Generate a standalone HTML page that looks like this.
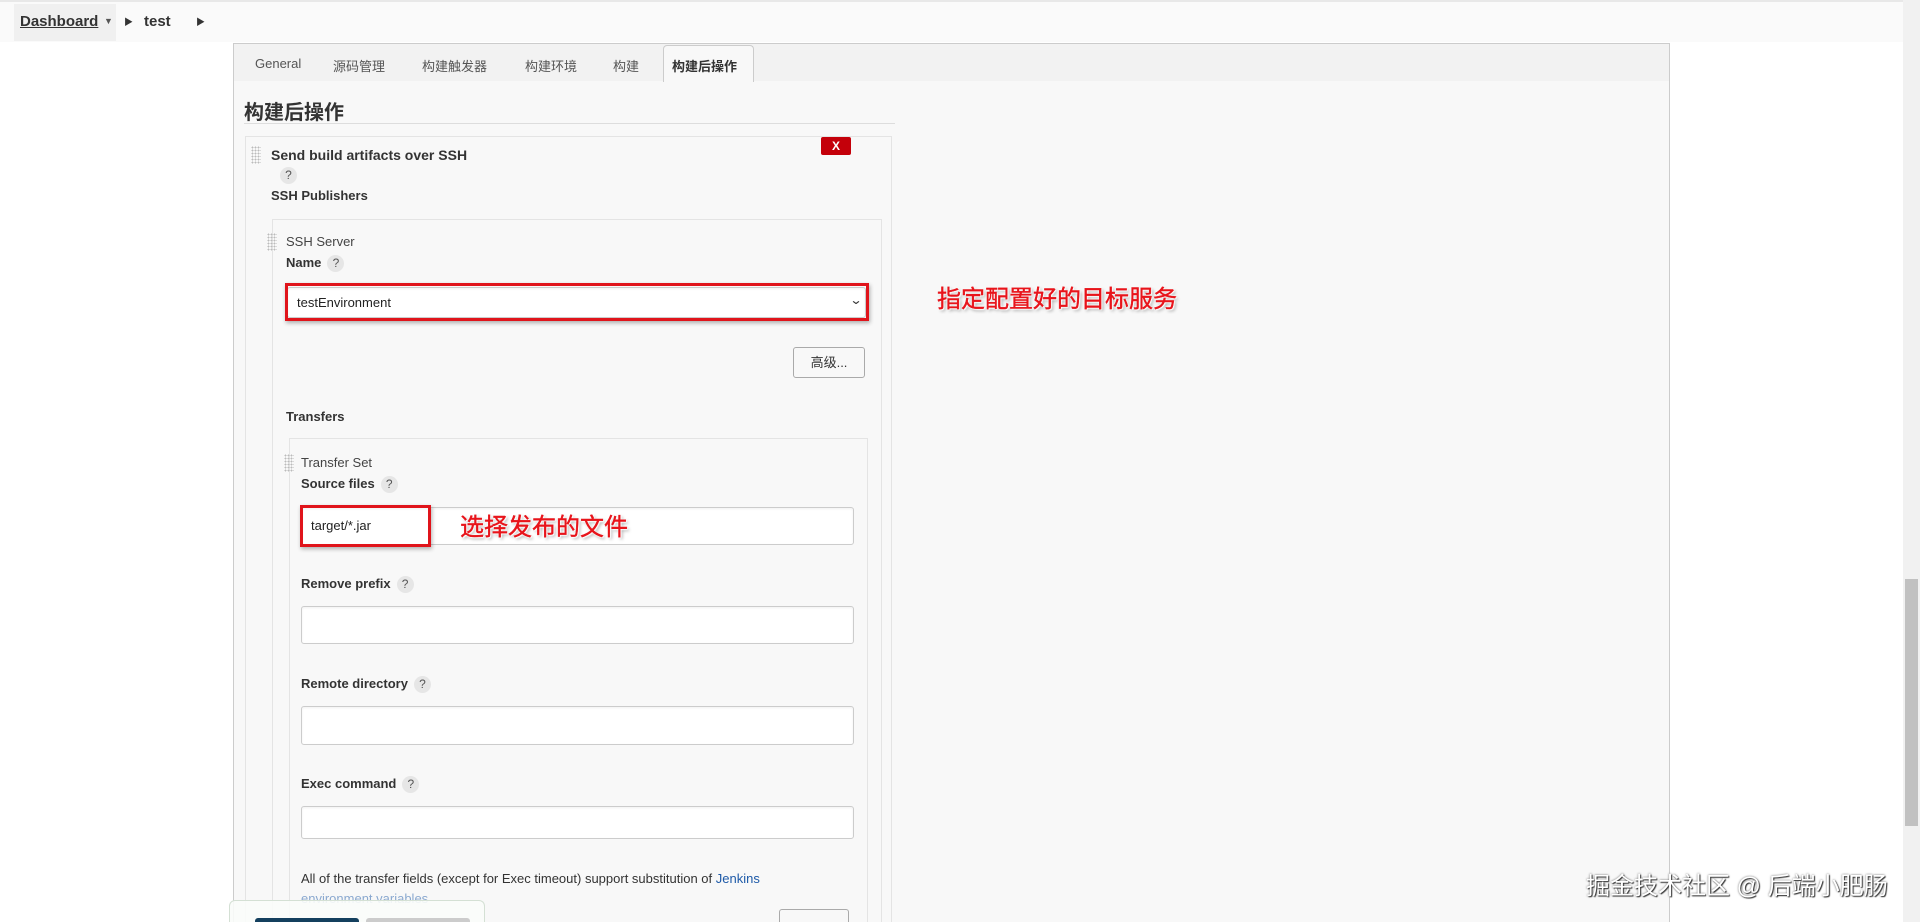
<!DOCTYPE html>
<html style="width:1920px;height:922px;overflow:hidden"><head><meta charset="utf-8"><style>
*{box-sizing:border-box;margin:0;padding:0}
body{width:1920px;height:922px;overflow:hidden;background:#fff;font-family:"Liberation Sans","Noto Sans CJK SC",sans-serif;color:#333;position:relative;font-size:13px}
.a{position:absolute;white-space:nowrap}
.b{font-weight:bold}
.q{display:inline-block;width:17px;height:17px;border-radius:50%;background:#e6e6e6;color:#555;font-size:12px;text-align:center;line-height:17px;font-weight:normal;margin-left:6px}
.inp{position:absolute;background:#fff;border:1px solid #ccc;border-radius:3px;box-shadow:inset 0 1px 2px rgba(0,0,0,.06)}
.h{position:absolute;width:10px;height:18px;background-image:radial-gradient(#bbb 0.8px,transparent 1px);background-size:3px 3px}
.ann{position:absolute;color:#e8141b;font-size:24px;white-space:nowrap;-webkit-text-stroke:0.4px #e8141b;text-shadow:0 0 2px #fff,0 0 2px #fff,1px 1px 1px #fff,2px 2px 3px rgba(0,0,0,.4)}
</style></head><body>
<div class="a" style="left:0;top:0;width:1920px;height:42px;background:#fafafa;border-top:2px solid #e8e8e8"></div>
<div class="a" style="left:14px;top:4px;width:102px;height:37px;background:#f0f0f0"></div>
<div class="a b" style="left:20px;top:13px;font-size:15px;text-decoration:underline;color:#333">Dashboard</div>
<div class="a" style="left:104px;top:16px;font-size:9px;color:#555">▼</div>
<div class="a" style="left:124px;top:15px;font-size:9px;color:#333">▶</div>
<div class="a b" style="left:144px;top:13px;font-size:15px">test</div>
<div class="a" style="left:196px;top:15px;font-size:9px;color:#333">▶</div>

<div class="a" style="left:233px;top:43px;width:1437px;height:879px;background:#f8f8f8;border-left:1px solid #ccc;border-top:1px solid #ccc;border-right:1px solid #ccc"></div>
<div class="a" style="left:234px;top:44px;width:1435px;height:37px;background:#f2f2f2"></div>
<div class="a" style="left:663px;top:45px;width:91px;height:37px;background:#f8f8f8;border:1px solid #ccc;border-bottom:none;border-radius:4px 4px 0 0"></div>
<div class="a" style="left:255px;top:56px;color:#555">General</div>
<div class="a" style="left:333px;top:56px;color:#555">源码管理</div>
<div class="a" style="left:422px;top:56px;color:#555">构建触发器</div>
<div class="a" style="left:525px;top:56px;color:#555">构建环境</div>
<div class="a" style="left:613px;top:56px;color:#555">构建</div>
<div class="a b" style="left:672px;top:56px;color:#333">构建后操作</div>

<div class="a b" style="left:244px;top:96px;font-size:20px">构建后操作</div>
<div class="a" style="left:244px;top:123px;width:651px;height:1px;background:#ddd"></div>

<div class="a" style="left:245px;top:136px;width:647px;height:800px;border:1px solid #e4e4e4;clip-path:inset(0 0 14px 0)"></div>
<div class="h" style="left:251px;top:146px"></div>
<div class="a b" style="left:271px;top:147px;font-size:14px">Send build artifacts over SSH</div>
<div class="a" style="left:821px;top:137px;width:30px;height:18px;background:#c4000a;border-radius:2px;color:#fff;font-weight:bold;font-size:12px;text-align:center;line-height:18px">X</div>
<div class="a" style="left:274px;top:167px"><span class="q">?</span></div>
<div class="a b" style="left:271px;top:188px;font-size:13px">SSH Publishers</div>

<div class="a" style="left:272px;top:219px;width:610px;height:703px;border:1px solid #e4e4e4;border-bottom:none"></div>
<div class="h" style="left:267px;top:233px"></div>
<div class="a" style="left:286px;top:234px;color:#444">SSH Server</div>
<div class="a b" style="left:286px;top:255px">Name<span class="q">?</span></div>
<div class="inp" style="left:287px;top:287px;width:579px;height:31px"></div>
<div class="a" style="left:285px;top:283px;width:584px;height:38px;border:3px solid #e0141b;box-shadow:1px 2px 4px rgba(0,0,0,.3)"></div>
<div class="a" style="left:297px;top:295px;font-size:13px;color:#222">testEnvironment</div>
<div class="a" style="left:851px;top:293px;font-size:12px;color:#333;transform:scaleX(1.3)">⌄</div>
<div class="a" style="left:793px;top:347px;width:72px;height:31px;border:1px solid #aaa;border-radius:3px;background:#f8f8f8;text-align:center;line-height:29px;font-size:13px">高级...</div>

<div class="a b" style="left:286px;top:409px">Transfers</div>
<div class="a" style="left:289px;top:438px;width:579px;height:484px;border:1px solid #e4e4e4;border-bottom:none"></div>
<div class="h" style="left:284px;top:454px"></div>
<div class="a" style="left:301px;top:455px;color:#444">Transfer Set</div>
<div class="a b" style="left:301px;top:476px">Source files<span class="q">?</span></div>
<div class="inp" style="left:301px;top:507px;width:553px;height:38px"></div>
<div class="a" style="left:300px;top:505px;width:131px;height:42px;border:3px solid #e0141b;box-shadow:1px 2px 4px rgba(0,0,0,.3)"></div>
<div class="a" style="left:311px;top:518px;color:#222">target/*.jar</div>
<div class="ann" style="left:460px;top:507px">选择发布的文件</div>

<div class="a b" style="left:301px;top:576px">Remove prefix<span class="q">?</span></div>
<div class="inp" style="left:301px;top:606px;width:553px;height:38px"></div>
<div class="a b" style="left:301px;top:676px">Remote directory<span class="q">?</span></div>
<div class="inp" style="left:301px;top:706px;width:553px;height:39px"></div>
<div class="a b" style="left:301px;top:776px">Exec command<span class="q">?</span></div>
<div class="inp" style="left:301px;top:806px;width:553px;height:33px"></div>
<div class="a" style="left:301px;top:871px;color:#333">All of the transfer fields (except for Exec timeout) support substitution of <span style="color:#1e5aa8">Jenkins</span></div>
<div class="a" style="left:301px;top:891px;color:#1e5aa8;opacity:.5">environment variables</div>
<div class="a" style="left:779px;top:909px;width:70px;height:13px;border:1px solid #aaa;border-bottom:none;border-radius:3px 3px 0 0;background:#f8f8f8"></div>

<div class="a" style="left:229px;top:900px;width:256px;height:22px;background:rgba(250,252,250,.9);border:1px solid #d4e0d4;border-bottom:none;border-radius:6px 6px 0 0"></div>
<div class="a" style="left:255px;top:918px;width:104px;height:4px;background:#14405e;border-radius:3px 3px 0 0"></div>
<div class="a" style="left:366px;top:918px;width:104px;height:4px;background:#ccc;border-radius:3px 3px 0 0"></div>

<div class="ann" style="left:937px;top:279px">指定配置好的目标服务</div>

<div class="a" style="left:1903px;top:0;width:17px;height:922px;background:#f1f1f1"></div>
<div class="a" style="left:1905px;top:579px;width:13px;height:247px;background:#c1c1c1"></div>

<div class="a" style="left:1586px;top:866px;font-size:24px;color:#fff;text-shadow:1px 1px 1px #333,0 0 2px #666">掘金技术社区 @ 后端小肥肠</div>
</body></html>
